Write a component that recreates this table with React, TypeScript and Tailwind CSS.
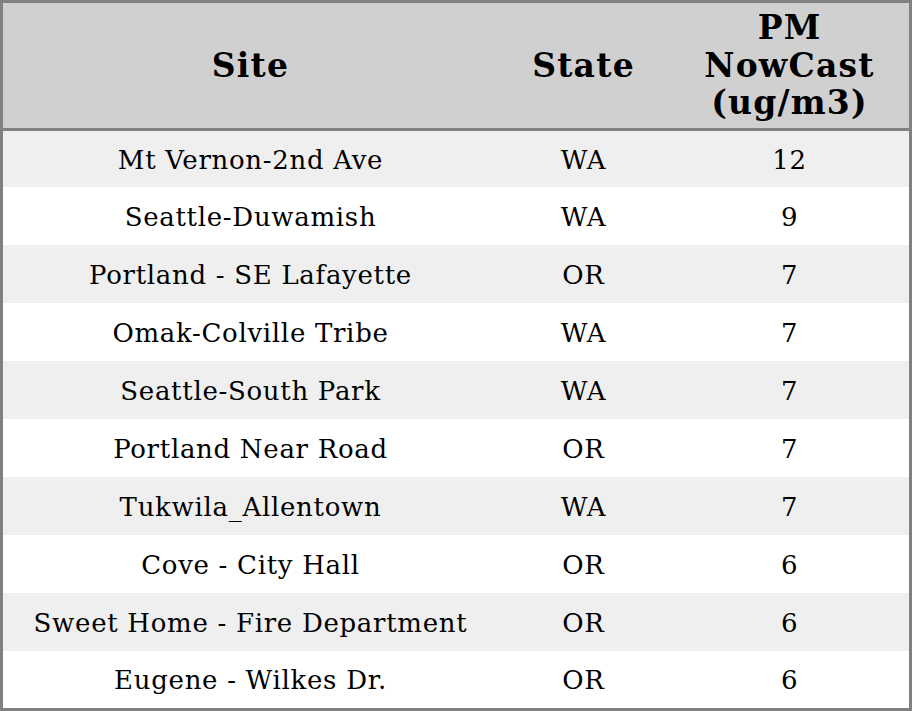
const ROWS: [string, string, number][] = [
  ["Mt Vernon-2nd Ave", "WA", 12],
  ["Seattle-Duwamish", "WA", 9],
  ["Portland - SE Lafayette", "OR", 7],
  ["Omak-Colville Tribe", "WA", 7],
  ["Seattle-South Park", "WA", 7],
  ["Portland Near Road", "OR", 7],
  ["Tukwila_Allentown", "WA", 7],
  ["Cove - City Hall", "OR", 6],
  ["Sweet Home - Fire Department", "OR", 6],
  ["Eugene - Wilkes Dr.", "OR", 6],
];

export default function App() {
  return (
    <div className="h-[711px] w-[912px] overflow-hidden border-[3px] border-[#808080] bg-white font-['DejaVu_Serif',serif] text-black">
      <table className="w-full table-fixed border-separate border-spacing-0 text-center">
        <colgroup>
          <col className="w-[494px]" />
          <col className="w-[172px]" />
          <col />
        </colgroup>
        <thead>
          <tr className="bg-[#d0d0d0] text-[33px] font-bold leading-[37.5px] tracking-[1.2px]">
            <th className="h-[128px] border-b-[3px] border-[#808080] p-0 pl-[1px]">Site</th>
            <th className="h-[128px] border-b-[3px] border-[#808080] p-0 pl-[1px]">State</th>
            <th className="h-[128px] border-b-[3px] border-[#808080] p-0 pl-[1px]">
              PM
              <br />
              NowCast
              <br />
              (ug/m3)
            </th>
          </tr>
        </thead>
        <tbody className="text-[26px] tracking-[0.7px]">
          {ROWS.map(([site, state, val], i) => (
            <tr
              key={site}
              className={`${i === 0 ? "h-[56px]" : i === ROWS.length - 1 ? "h-[57px]" : "h-[58px]"} ${
                i % 2 === 0 ? "bg-[#efefef]" : "bg-white"
              }`}
            >
              <td className="p-0 pt-[2px] pl-[1px]">{site}</td>
              <td className="p-0 pt-[2px] pl-[1px]">{state}</td>
              <td className="p-0 pt-[2px] pl-[1px]">{val}</td>
            </tr>
          ))}
        </tbody>
      </table>
    </div>
  );
}
